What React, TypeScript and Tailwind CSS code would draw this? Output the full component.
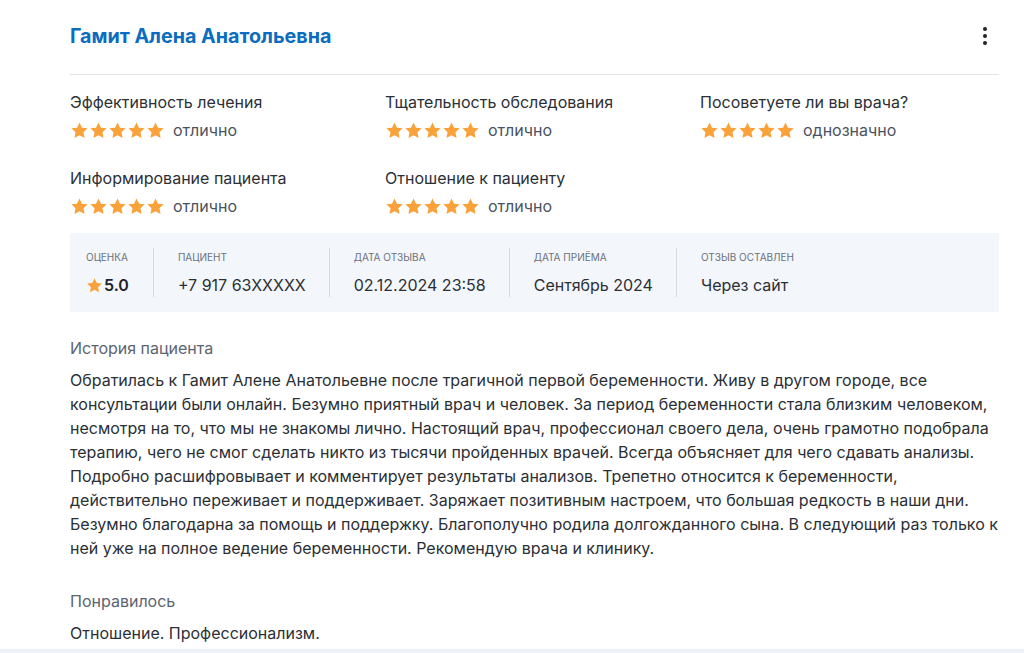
import React from 'react';

const Star = ({ size = 16 }: { size?: number }) => (
  <svg width={size} height={size} viewBox="0 0 24 24" fill="#f9a23a">
    <path d="M12 1.8l3.1 6.6 7.2.9-5.3 5 1.4 7.1L12 17.9l-6.4 3.5 1.4-7.1-5.3-5 7.2-.9z" />
  </svg>
);

const ratings = [
  { label: 'Эффективность лечения', value: 'отлично' },
  { label: 'Тщательность обследования', value: 'отлично' },
  { label: 'Посоветуете ли вы врача?', value: 'однозначно' },
  { label: 'Информирование пациента', value: 'отлично' },
  { label: 'Отношение к пациенту', value: 'отлично' },
];

const info = [
  { label: 'Пациент', value: '+7 917 63XXXXX' },
  { label: 'Дата отзыва', value: '02.12.2024 23:58' },
  { label: 'Дата приёма', value: 'Сентябрь 2024' },
  { label: 'Отзыв оставлен', value: 'Через сайт' },
];

export default function App() {
  return (
    <div className="min-h-[653px] bg-white font-['Inter',sans-serif] flex flex-col">
      <div className="flex-1 pl-[70px] pr-[25px] pt-[22px]">
        <div className="w-[929px]">
          <div className="flex items-center justify-between pb-[24px] border-b border-[#dfe3ea]">
            <h1 className="text-[19.7px] leading-[28px] font-bold text-[#0b6cc0]">Гамит Алена Анатольевна</h1>
            <button className="mr-[8px] flex flex-col gap-[3px] p-1">
              <span className="w-[4px] h-[4px] rounded-full bg-[#222]" />
              <span className="w-[4px] h-[4px] rounded-full bg-[#222]" />
              <span className="w-[4px] h-[4px] rounded-full bg-[#222]" />
            </button>
          </div>

          <div className="grid grid-cols-[315px_315px_1fr] gap-y-[27px] pt-[16px]">
            {ratings.map((r) => (
              <div key={r.label}>
                <div className="text-[16px] leading-[22px] text-[#2b2f36]">{r.label}</div>
                <div className="flex items-center h-[20px] mt-[7px]">
                  <div className="flex">
                    {[0, 1, 2, 3, 4].map((i) => (
                      <Star key={i} size={19} />
                    ))}
                  </div>
                  <span className="ml-[8px] text-[16px] leading-[20px] text-[#4a5260]">{r.value}</span>
                </div>
              </div>
            ))}
          </div>

          <div className="mt-[17px] bg-[#f3f6fa] h-[79px] flex items-center pl-[16px]">
            <div className="pr-[24px] border-r border-[#d6dbe3] py-[2px]">
              <div className="text-[10px] leading-[14px] uppercase text-[#6b7280]">Оценка</div>
              <div className="flex items-center gap-[1px] mt-[11px]">
                <Star size={17} />
                <span className="text-[16px] leading-[20px] font-semibold text-[#1f2329]">5.0</span>
              </div>
            </div>
            {info.map((c, i) => (
              <div
                key={c.label}
                className={`pl-[24px] pr-[23px] py-[2px] ${i < info.length - 1 ? 'border-r border-[#d6dbe3]' : ''}`}
              >
                <div className="text-[10px] leading-[14px] uppercase text-[#6b7280]">{c.label}</div>
                <div className="text-[16px] leading-[20px] text-[#2b2f36] mt-[11px]">{c.value}</div>
              </div>
            ))}
          </div>

          <div className="mt-[25px] text-[16px] leading-[22px] text-[#5c6470]">История пациента</div>
          <p className="mt-[9px] text-[16px] leading-[24px] text-[#2b2f36]">
            Обратилась к Гамит Алене Анатольевне после трагичной первой беременности. Живу в другом городе, все
            консультации были онлайн. Безумно приятный врач и человек. За период беременности стала близким человеком,
            несмотря на то, что мы не знакомы лично. Настоящий врач, профессионал своего дела, очень грамотно подобрала
            терапию, чего не смог сделать никто из тысячи пройденных врачей. Всегда объясняет для чего сдавать анализы.
            Подробно расшифровывает и комментирует результаты анализов. Трепетно относится к беременности,
            действительно переживает и поддерживает. Заряжает позитивным настроем, что большая редкость в наши дни.
            Безумно благодарна за помощь и поддержку. Благополучно родила долгожданного сына. В следующий раз только к
            ней уже на полное ведение беременности. Рекомендую врача и клинику.
          </p>

          <div className="mt-[30px] text-[16px] leading-[22px] text-[#5c6470]">Понравилось</div>
          <div className="mt-[10px] text-[16px] leading-[22px] text-[#2b2f36]">Отношение. Профессионализм.</div>
        </div>
      </div>
      <div className="h-[4px] bg-[#eef2f8]" />
    </div>
  );
}
